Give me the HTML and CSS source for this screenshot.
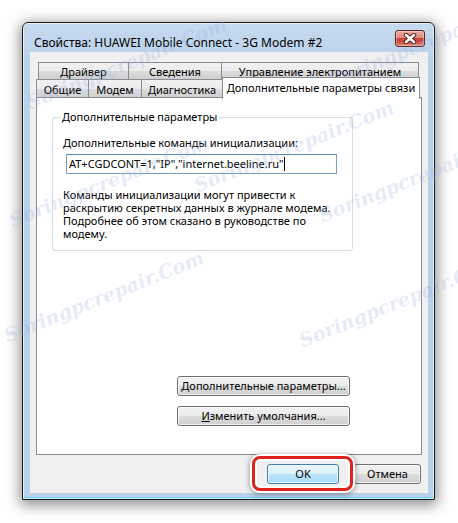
FILE: index.html
```html
<!DOCTYPE html>
<html lang="ru">
<head>
<meta charset="utf-8">
<title>Свойства: HUAWEI Mobile Connect - 3G Modem #2</title>
<link rel="stylesheet" href="styles.css">
</head>
<body>
<div class="window">
  <div class="titlebar">
    <span class="title">Свойства: HUAWEI Mobile Connect - 3G Modem #2</span>
    <button class="close" aria-label="Закрыть">
      <svg width="14" height="11" viewBox="0 0 14 11">
        <path d="M3 2 L11 9 M11 2 L3 9" stroke="#4a1a16" stroke-width="4.4" stroke-linecap="round" fill="none"/>
        <path d="M3 2 L11 9 M11 2 L3 9" stroke="#ffffff" stroke-width="2.6" stroke-linecap="round" fill="none"/>
      </svg>
    </button>
  </div>
  <div class="client">
    <div class="tabs">
      <div class="tabrow back">
        <div class="tab t-driver">Драйвер</div>
        <div class="tab t-info">Сведения</div>
        <div class="tab t-power">Управление электропитанием</div>
      </div>
      <div class="tabrow front">
        <div class="tab t-general">Общие</div>
        <div class="tab t-modem">Модем</div>
        <div class="tab t-diag">Диагностика</div>
        <div class="tab t-adv selected">Дополнительные параметры связи</div>
      </div>
    </div>
    <div class="panel">
      <fieldset class="group">
        <legend>Дополнительные параметры</legend>
        <div class="label"><u>Д</u>ополнительные команды инициализации:</div>
        <div class="textbox">AT+CGDCONT=1,"IP","internet.beeline.ru"<span class="caret"></span></div>
        <p class="note">Команды инициализации могут привести к<br>раскрытию секретных данных в журнале модема.<br>Подробнее об этом сказано в руководстве по<br>модему.</p>
      </fieldset>
      <div class="panel-buttons">
        <button class="btn wide"><u>Д</u>ополнительные параметры...</button>
        <button class="btn wide"><u>И</u>зменить умолчания...</button>
      </div>
    </div>
    <div class="footer">
      <button class="btn ok">OK</button>
      <button class="btn cancel">Отмена</button>
    </div>
  </div>
</div>

<div class="highlight"></div>

<span class="wm wm1">Soringpcrepair.Com</span>
<span class="wm wm2">Soringpcrepair.Com</span>
<span class="wm wm3">Soringpcrepair.Com</span>
<span class="wm wm4">Soringpcrepair.Com</span>
<span class="wm wm5">Soringpcrepair.Com</span>
<span class="wm wm6">Soringpcrepair.Com</span>
<span class="wm wm7">Soringpcrepair.Com</span>
</body>
</html>
```

FILE: styles.css
```css
* { box-sizing: border-box; }

html, body {
  margin: 0;
  padding: 0;
  background: #ffffff;
  width: 458px;
  height: 523px;
  overflow: hidden;
  font-family: "Noto Sans", "Open Sans", sans-serif;
  font-size: 11px;
  color: #000;
}

body { position: relative; padding: 22px 0 0 22px; }

.window {
  width: 413px;
  height: 478px;
  border: 1px solid #1b1b1b;
  border-radius: 6px 6px 0 0;
  background: linear-gradient(#c6daef, #b9d1ea 40px);
  padding: 0 6px 6px 7px;
  box-shadow: 0 3px 14px 2px rgba(0, 0, 0, 0.45), inset 0 0 0 1px rgba(255,255,255,0.6), inset 0 -2px 0 0 #6fcdf0;
  display: flex;
  flex-direction: column;
}

.titlebar {
  height: 29px;
  display: flex;
  align-items: center;
  justify-content: space-between;
  padding: 0 3px 0 4px;
}

.title {
  font-size: 12px;
  line-height: 16px;
  margin-top: 10px;
}

.close {
  width: 30px;
  height: 17px;
  margin-top: 1px;
  padding: 0;
  border: 1px solid #5b2520;
  border-radius: 3px;
  background: linear-gradient(#e9aaa0 0%, #dd8a7f 45%, #c7463a 50%, #c9493c 70%, #e08a7c 100%);
  box-shadow: inset 0 0 0 1px rgba(255,255,255,0.35);
  display: flex;
  align-items: center;
  justify-content: center;
}

.client {
  flex: 1;
  background: #f0f0f0;
  padding: 10px 6px 9px 6px;
  display: flex;
  flex-direction: column;
}

.tabs { height: 36px; display: flex; flex-direction: column; }

.tabrow { display: flex; }
.tabrow.back { height: 17px; padding-left: 2px; }
.tabrow.front { height: 19px; }

.tab {
  height: 100%;
  border: 1px solid #898c95;
  border-bottom: none;
  margin-right: -1px;
  background: linear-gradient(#f2f2f2 0%, #ebebeb 50%, #dddddd 50%, #cfcfcf 100%);
  display: flex;
  align-items: center;
  justify-content: center;
  line-height: 15px;
  white-space: nowrap;
}

.t-driver { width: 91px; }
.t-info { width: 94px; }
.t-power { width: 198px; }
.t-general { width: 53px; }
.t-modem { width: 54px; }
.t-diag { width: 82px; }
.t-adv { width: 198px; }

.tab.selected {
  position: relative;
  z-index: 2;
  background: #ffffff;
  height: 22px;
  margin-top: -2px;
  padding-bottom: 3px;
}

.panel {
  height: 358px;
  margin-top: -1px;
  background: #ffffff;
  border: 1px solid #898c95;
  padding: 12px 0 28px 15px;
  display: flex;
  flex-direction: column;
}

.group {
  width: 301px;
  margin: 0;
  padding: 0 0 10px 10px;
  border: 1px solid #d5dfe5;
  border-radius: 3px;
  min-height: 0;
}

.group legend {
  margin-left: -3px;
  padding: 0 2px;
  line-height: 14px;
}

.label {
  line-height: 14px;
  margin-top: 12px;
}

.textbox {
  width: 271px;
  height: 20px;
  margin: 4px 0 0 3px;
  border: 1px solid #7a9ebf;
  border-top-color: #5d87b1;
  background: #fff;
  padding: 0 0 0 2px;
  line-height: 18px;
  display: flex;
  align-items: center;
  white-space: nowrap;
}

.caret {
  display: inline-block;
  width: 1px;
  height: 14px;
  background: #000;
  margin-left: 1px;
}

.note {
  margin: 14px 0 0 0;
  line-height: 13px;
}

.panel-buttons {
  margin-top: auto;
  padding-left: 125px;
  display: flex;
  flex-direction: column;
  gap: 10px;
}

.btn {
  font-family: inherit;
  font-size: 11px;
  color: #000;
  height: 20px;
  padding: 0;
  border: 1px solid #707070;
  border-radius: 3px;
  background: linear-gradient(#f2f2f2 0%, #ebebeb 50%, #dddddd 50%, #cfcfcf 100%);
  box-shadow: inset 0 0 0 1px rgba(255,255,255,0.7);
  line-height: 16px;
}

.btn.wide { width: 173px; }

.footer {
  margin-top: 9px;
  display: flex;
  justify-content: flex-end;
  gap: 15px;
  padding-right: 1px;
}

.btn.ok {
  width: 72px;
  border-color: #3c7fb1;
  background: linear-gradient(#eaf6fd 0%, #d9f0fc 50%, #bee6fd 50%, #a7d9f5 100%);
  box-shadow: inset 0 0 0 1px rgba(255,255,255,0.8);
}

.btn.cancel { width: 67px; }

.highlight {
  position: absolute;
  left: 252px;
  top: 456px;
  width: 101px;
  height: 35px;
  border: 3px solid #e0211c;
  border-radius: 8px;
  box-shadow: 0 0 0 2px #ffffff, 0 1px 5px 3px rgba(0, 0, 0, 0.3), inset 0 0 0 2px #ffffff;
  pointer-events: none;
}

.wm {
  position: absolute;
  font-family: "DejaVu Serif", serif;
  font-weight: bold;
  font-style: italic;
  font-size: 19px;
  color: rgba(150, 175, 225, 0.25);
  transform: rotate(-22deg);
  transform-origin: left center;
  white-space: nowrap;
  pointer-events: none;
}

.wm1 { left: 28px; top: 92px; }
.wm2 { left: 330px; top: 70px; }
.wm3 { left: 195px; top: 175px; }
.wm4 { left: 10px; top: 210px; }
.wm5 { left: 320px; top: 205px; }
.wm6 { left: 5px; top: 325px; }
.wm7 { left: 300px; top: 330px; }
```
